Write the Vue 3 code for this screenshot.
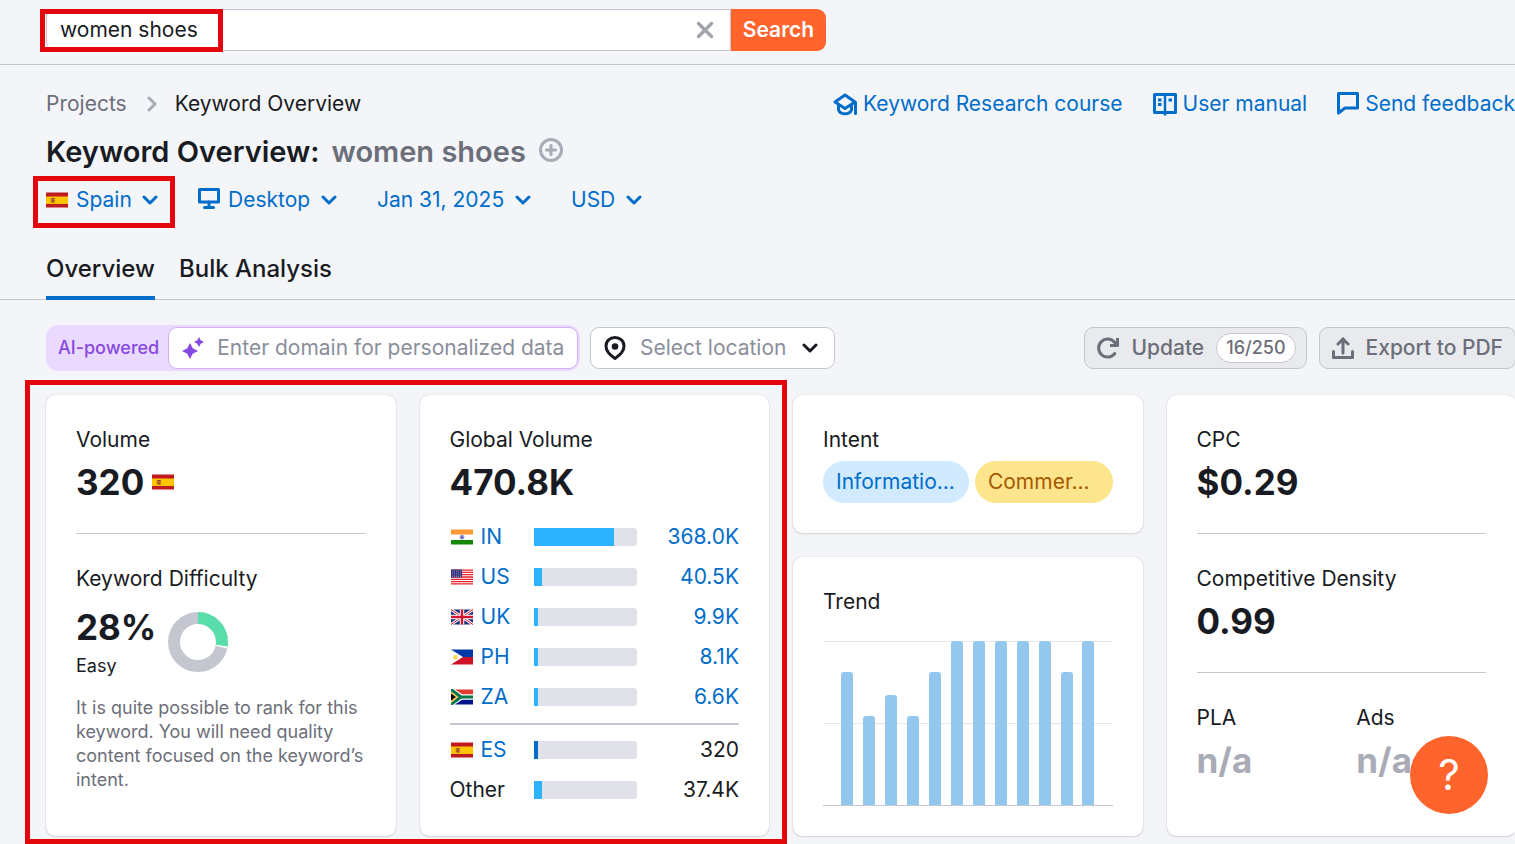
<template>
    <div class="page">
        <header class="topbar">
            <form class="search" role="search" @submit.prevent>
                <div class="search-field">
                    <input v-model="query" type="text" aria-label="Keyword" />
                    <button type="button" class="icon-button" aria-label="Clear" @click="query = ''">
                        <svg width="18" height="18" viewBox="0 0 18 18">
                            <path d="M2.500 2.500 15.500 15.500M15.500 2.500 2.500 15.500" fill="none" stroke="#a2a4ad" stroke-width="3.400" stroke-linecap="round" />
                        </svg>
                    </button>
                </div>
                <button type="submit" class="search-submit">Search</button>
                <div class="mark mark-search"></div>
            </form>
        </header>

        <section class="head">
            <div class="head-row">
                <nav class="breadcrumb" aria-label="Breadcrumb">
                    <a href="#">Projects</a>
                    <svg width="10" height="16" viewBox="0 0 10 16">
                        <path d="M2 2l6 6-6 6" fill="none" stroke="#a9abb6" stroke-width="3" stroke-linecap="round" stroke-linejoin="round" />
                    </svg>
                    <span>Keyword Overview</span>
                </nav>
                <nav class="help-links" aria-label="Help">
                    <a href="#">
                        <svg width="24" height="24" viewBox="0 0 24 24" fill="none" stroke="currentColor" stroke-width="3" stroke-linejoin="round" stroke-linecap="round">
                            <path d="M12 3 2 10l10 6.500L22 10z" />
                            <path d="M5.500 13.500v4.500c2 5 11 5 13 0v-4" />
                            <path d="M22.500 10.500v11" />
                        </svg>
                        Keyword Research course
                    </a>
                    <a href="#">
                        <svg width="24" height="24" viewBox="0 0 24 24" fill="none" stroke="currentColor">
                            <path d="M1.500 2.500h21v18h-21z" stroke-width="3" stroke-linejoin="round" />
                            <path d="M12 2v21.500" stroke-width="2.500" />
                            <path d="M5 8h3.500M5 12.500h3.500M15.500 8H19" stroke-width="3" />
                        </svg>
                        User manual
                    </a>
                    <a href="#">
                        <svg width="22" height="24" viewBox="0 0 22 24">
                            <path d="M1.500 1.500h19v14.500H8l-6.500 5z" fill="none" stroke="currentColor" stroke-width="3" stroke-linejoin="round" />
                        </svg>
                        Send feedback
                    </a>
                </nav>
            </div>

            <h1>
                <span>Keyword Overview:</span>
                <span class="keyword">{{ query }}</span>
                <button type="button" class="icon-button" aria-label="Add to list">
                    <svg width="26" height="28" viewBox="0 0 26 28" fill="none" stroke="#a9abb6" stroke-width="3" stroke-linecap="round">
                        <circle cx="13" cy="12" r="10.500" />
                        <path d="M13 7.500v9M8.500 12h9" />
                    </svg>
                </button>
            </h1>

            <div class="filters">
                <div v-for="filter in filters" :key="filter.label" class="filter">
                    <svg v-if="filter.icon === 'flag'" width="22" height="16" viewBox="0 0 22 15" v-html="flags.ES"></svg>
                    <svg v-if="filter.icon === 'desktop'" width="22" height="26" viewBox="0 0 22 26">
                        <path d="M1.500 2.500h19v12.500h-19z" fill="none" stroke="#006dca" stroke-width="3" stroke-linejoin="round" />
                        <path d="M11 15v5M6.500 20.500h9" fill="none" stroke="#006dca" stroke-width="3" stroke-linecap="round" />
                    </svg>
                    <select :aria-label="filter.label">
                        <option>{{ filter.value }}</option>
                    </select>
                    <svg class="chevron" width="16" height="10" viewBox="0 0 16 10">
                        <path d="M2 2l6 6 6-6" fill="none" stroke="#006dca" stroke-width="3" stroke-linecap="round" stroke-linejoin="round" />
                    </svg>
                    <div v-if="filter.icon === 'flag'" class="mark mark-country"></div>
                </div>
            </div>

            <nav class="tabs" aria-label="Reports">
                <a href="#" class="active">Overview</a>
                <a href="#">Bulk Analysis</a>
            </nav>
        </section>

        <main>
            <div class="toolbar">
                <label class="ai">
                    <span>AI-powered</span>
                    <span class="ai-field">
                        <svg width="22" height="22" viewBox="0 0 22 22" fill="#8649e1">
                            <path d="M8 6l2.700 5.300L16 14l-5.300 2.700L8 22l-2.700-5.300L0 14l5.300-2.700z" />
                            <path d="M17 0l1.700 3.300L22 5l-3.300 1.700L17 10l-1.700-3.300L12 5l3.300-1.700z" />
                        </svg>
                        <input type="text" placeholder="Enter domain for personalized data" />
                    </span>
                </label>
                <div class="location">
                    <svg width="22" height="26" viewBox="0 0 22 26">
                        <path d="M11 2.500c-5 0-9 3.700-9 8.500 0 5.500 4.500 9.500 9 12.500 4.500-3 9-7 9-12.500 0-4.800-4-8.500-9-8.500z" fill="none" stroke="#191b23" stroke-width="3" />
                        <circle cx="11" cy="11.500" r="3.300" fill="#191b23" />
                    </svg>
                    <select aria-label="Location">
                        <option>Select location</option>
                    </select>
                    <svg class="chevron" width="16" height="10" viewBox="0 0 16 10">
                        <path d="M2 2l6 6 6-6" fill="none" stroke="#191b23" stroke-width="3" stroke-linecap="round" stroke-linejoin="round" />
                    </svg>
                </div>
                <div class="actions">
                    <button type="button" class="action">
                        <svg width="22" height="22" viewBox="0 0 22 22" fill="none" stroke="currentColor" stroke-width="3">
                            <path d="M17.800 16.500A9 9 0 1 1 17.500 5.200l1.500 1.800" stroke-linecap="round" />
                            <path d="M20.500 1v7.500H13" stroke-linejoin="round" />
                        </svg>
                        Update
                        <span class="quota">16/250</span>
                    </button>
                    <button type="button" class="action">
                        <svg width="22" height="22" viewBox="0 0 22 22" fill="none" stroke="currentColor" stroke-width="3">
                            <path d="M1.500 14.500v6h19v-6" stroke-linecap="round" stroke-linejoin="round" />
                            <path d="M11 16V3M6 7l5-5 5 5" stroke-linecap="round" />
                        </svg>
                        Export to PDF
                    </button>
                </div>
            </div>

            <div class="cards">
                <div class="volume-group">
                    <section class="card">
                        <h2>Volume</h2>
                        <p class="value">
                            320
                            <svg width="22" height="16" viewBox="0 0 22 15" v-html="flags.ES"></svg>
                        </p>
                        <hr />
                        <h2>Keyword Difficulty</h2>
                        <div class="difficulty">
                            <div>
                                <p class="percent">28%</p>
                                <p class="level">Easy</p>
                            </div>
                            <svg width="60" height="60" viewBox="0 0 60 60" fill="none" stroke-width="12">
                                <circle cx="30" cy="30" r="24" stroke="#c4c7cf" />
                                <circle cx="30" cy="30" r="24" stroke="#fff" pathLength="100" stroke-dasharray="28.500 100" transform="rotate(-90 30 30)" />
                                <circle cx="30" cy="30" r="24" stroke="#59ddaa" pathLength="100" stroke-dasharray="27.500 100" transform="rotate(-90 30 30)" />
                            </svg>
                        </div>
                        <p class="hint">It is quite possible to rank for this keyword. You will need quality content focused on the keyword’s intent.</p>
                    </section>

                    <section class="card global-volume">
                        <h2>Global Volume</h2>
                        <p class="value">470.8K</p>
                        <table>
                            <tbody>
                                <tr v-for="row in countries" :key="row.code" :class="{ local: row.local }">
                                    <th scope="row">
                                        <a v-if="row.flag" href="#" class="country">
                                            <svg width="22" height="16" viewBox="0 0 22 15" v-html="flags[row.code]"></svg>
                                            {{ row.code }}
                                        </a>
                                        <span v-else>{{ row.code }}</span>
                                    </th>
                                    <td class="bar-cell">
                                        <div class="bar">
                                            <div :style="{ width: row.share + '%' }"></div>
                                        </div>
                                    </td>
                                    <td class="amount">
                                        <a v-if="row.flag && !row.local" href="#">{{ row.volume }}</a>
                                        <span v-else>{{ row.volume }}</span>
                                    </td>
                                </tr>
                            </tbody>
                        </table>
                    </section>
                    <div class="mark mark-volume"></div>
                </div>

                <div class="column">
                    <section class="card">
                        <h2>Intent</h2>
                        <div class="intents">
                            <span class="intent informational">Informatio...</span>
                            <span class="intent commercial">Commer...</span>
                        </div>
                    </section>
                    <section class="card trend">
                        <h2>Trend</h2>
                        <div class="chart">
                            <div v-for="(height, i) in trend" :key="i" :style="{ height: height + '%' }"></div>
                        </div>
                    </section>
                </div>

                <section class="card">
                    <h2>CPC</h2>
                    <p class="value">$0.29</p>
                    <hr />
                    <h2>Competitive Density</h2>
                    <p class="value">0.99</p>
                    <hr />
                    <div class="split">
                        <div>
                            <h2>PLA</h2>
                            <p class="value empty">n/a</p>
                        </div>
                        <div>
                            <h2>Ads</h2>
                            <p class="value empty">n/a</p>
                        </div>
                    </div>
                </section>
            </div>
        </main>

        <button type="button" class="help">?</button>
    </div>
</template>

<script setup>
import { ref } from "vue";

const query = ref("women shoes");

const filters = [
    { label: "Country", value: "Spain", icon: "flag" },
    { label: "Device", value: "Desktop", icon: "desktop" },
    { label: "Date", value: "Jan 31, 2025" },
    { label: "Currency", value: "USD" }
];

const countries = [
    { code: "IN", flag: true, share: 78, volume: "368.0K" },
    { code: "US", flag: true, share: 8, volume: "40.5K" },
    { code: "UK", flag: true, share: 4, volume: "9.9K" },
    { code: "PH", flag: true, share: 4, volume: "8.1K" },
    { code: "ZA", flag: true, share: 4, volume: "6.6K" },
    { code: "ES", flag: true, local: true, share: 4, volume: "320" },
    { code: "Other", share: 8, volume: "37.4K" }
];

const trend = [81, 54, 67, 54, 81, 100, 100, 100, 100, 100, 81, 100];

// inner markup of 22x15 flags
const flags = {
    ES: `<path fill="#c0191f" d="M0 0h22v15H0z"/><path fill="#ffc400" d="M0 4h22v7.500H0z"/>
        <path fill="#d9962a" d="M4.500 5.500h4.500v4.500H4.500z"/><path fill="none" stroke="#8f3a1c" d="M8.500 6H6v3.500h2.500M7 7.800h1.500"/>`,
    IN: `<path fill="#fff" d="M0 0h22v15H0z"/><path fill="#f93" d="M0 0h22v5H0z"/><path fill="#128807" d="M0 10.500h22V15H0z"/>
        <circle cx="11" cy="7.700" r="2" fill="#b5b5dc" stroke="#7777bb" stroke-width=".8"/><circle cx="11" cy="7.700" r=".8" fill="#000088"/>`,
    US: `<path fill="#fff" d="M0 0h22v15H0z"/>
        <path stroke="#e8202a" stroke-width="1.300" d="M0 .6h22M0 2.900h22M0 5.200h22M0 7.500h22M0 9.800h22M0 12.100h22M0 14.400h22"/>
        <path fill="#32327c" d="M0 0h11v8H0z"/><path stroke="#9c9cc8" stroke-width=".8" stroke-dasharray="1 1" d="M1 1.500h9M1 3.500h9M1 5.500h9M1 7h9"/>`,
    UK: `<path fill="#1b2f7d" d="M0 0h22v15H0z"/><path stroke="#fff" stroke-width="2.800" d="M0 0l22 15M22 0L0 15"/>
        <path stroke="#d2142e" stroke-width="1" d="M0 0l22 15M22 0L0 15"/><path stroke="#fff" stroke-width="4.500" d="M11 0v15M0 7.500h22"/>
        <path stroke="#d2142e" stroke-width="2.400" d="M11 0v15M0 7.500h22"/>`,
    PH: `<path fill="#0038a8" d="M0 0h22v7.500H0z"/><path fill="#ce1126" d="M0 7.500h22V15H0z"/><path fill="#fff" d="M0 0l12 7.500L0 15z"/>
        <circle cx="4.300" cy="7.700" r="2.300" fill="#fcd94a"/>`,
    ZA: `<path fill="#fff" d="M0 0h22v15H0z"/><path fill="#e03c31" d="M4 0h18v4.800H11z"/><path fill="#001489" d="M4 15h18v-4.800H11z"/>
        <path fill="none" stroke="#007749" stroke-width="3" d="M0 0l10 7.500L0 15M10 7.500h12"/>
        <path fill="#ffb81c" d="M0 2.500l6.800 5L0 12.500z"/><path fill="#000" d="M0 4l4.800 3.500L0 11z"/>`
};
</script>

<style>
body {
    background: #f4f5f9;
}
</style>

<style scoped>
.page {
    overflow: hidden;
    padding-bottom: 8px;
    color: #191b23;
    font-family: Inter, "Liberation Sans", sans-serif;
    font-size: 21px;
    line-height: 30px;
}

.page * {
    box-sizing: border-box;
}

h1,
h2,
p {
    margin: 0;
}

a {
    color: #006dca;
    text-decoration: none;
}

svg {
    display: block;
    flex: none;
}

button,
input,
select {
    font: inherit;
}

select {
    appearance: none;
    margin: 0;
    border: 0;
    background: none;
    outline: none;
}

.icon-button {
    padding: 0;
    border: 0;
    background: none;
}

.mark {
    position: absolute;
    border: 5px solid #e3060b;
    pointer-events: none;
}

.topbar {
    padding: 9px 46px 13px;
    border-bottom: 1px solid #c4c7cf;
}

.search {
    position: relative;
    display: flex;
    max-width: 780px;
    height: 42px;
}

.search-field {
    flex: 1;
    display: flex;
    align-items: center;
    padding: 0 16px 0 13px;
    border: 1px solid #c4c7cf;
    border-radius: 9px 0 0 9px;
    background: #fff;
}

.search-field input {
    flex: 1;
    min-width: 0;
    padding: 0;
    border: 0;
    color: inherit;
    background: none;
    outline: none;
}

.search-submit {
    width: 95px;
    padding: 0;
    border: 0;
    border-radius: 0 9px 9px 0;
    color: #fff;
    background: #ff642d;
    font-weight: 600;
}

.mark-search {
    top: 0;
    left: -6px;
    width: 183px;
    height: 43px;
}

.head {
    padding: 24px 0 0 46px;
    border-bottom: 1px solid #c4c7cf;
}

.head-row {
    display: flex;
    justify-content: space-between;
}

.breadcrumb {
    display: flex;
    align-items: center;
    gap: 20px;
}

.breadcrumb a {
    color: #6c6e79;
}

.breadcrumb svg {
    margin-right: -2px;
}

.help-links {
    display: flex;
    gap: 30px;
    white-space: nowrap;
}

.help-links a {
    display: flex;
    align-items: center;
    gap: 6px;
}

h1 {
    display: flex;
    align-items: center;
    gap: 12px;
    margin-top: 15px;
    font-size: 29px;
    font-weight: 600;
    line-height: 36px;
}

.keyword {
    color: #6c6e79;
}

.filters {
    display: flex;
    gap: 40px;
    margin-top: 15px;
}

.filter {
    position: relative;
    display: flex;
    align-items: center;
    gap: 8px;
}

.filter select {
    height: 30px;
    padding: 0 26px 0 0;
    color: #006dca;
}

.chevron {
    position: absolute;
    top: 50%;
    right: 0;
    margin-top: -5px;
    pointer-events: none;
}

.mark-country {
    inset: -9px -17px -13px -13px;
}

.tabs {
    display: flex;
    gap: 24px;
    margin: 36px 0 -1px;
    font-size: 24px;
    font-weight: 500;
    line-height: 36px;
}

.tabs a {
    padding-bottom: 9px;
    border-bottom: 4px solid transparent;
    color: #191b23;
}

.tabs .active {
    border-color: #006dca;
}

main {
    margin-right: -1px;
    padding: 25px 0 0 46px;
}

.toolbar {
    display: flex;
    align-items: center;
    gap: 10px;
}

.ai {
    display: flex;
    align-items: center;
    gap: 9px;
    width: 534px;
    padding: 2px 2px 2px 12px;
    border-radius: 12px;
    color: #8649e1;
    background: #ebdaff;
    font-size: 18px;
    font-weight: 500;
}

.ai-field {
    flex: 1;
    display: flex;
    align-items: center;
    gap: 13px;
    min-width: 0;
    height: 42px;
    padding-left: 13px;
    border: 1px solid #cfb0f7;
    border-radius: 9px;
    background: #fff;
}

.ai-field input {
    flex: 1;
    min-width: 0;
    padding: 0;
    border: 0;
    background: none;
    outline: none;
    font-size: 21px;
    font-weight: 400;
}

.ai-field input::placeholder {
    color: #8a8e9b;
    opacity: 1;
}

.location {
    position: relative;
    display: flex;
    align-items: center;
    gap: 14px;
    height: 42px;
    padding-left: 13px;
    border: 1px solid #c4c7cf;
    border-radius: 9px;
    background: #fff;
}

.location select {
    height: 40px;
    padding: 0 47px 0 0;
    color: #8a8e9b;
}

.location .chevron {
    right: 16px;
}

.actions {
    display: flex;
    gap: 12px;
    margin-left: auto;
}

.action {
    display: flex;
    align-items: center;
    gap: 12px;
    height: 42px;
    padding: 0 12px;
    border: 1px solid #c4c7cf;
    border-radius: 9px;
    color: #6c6e79;
    background: #e9eaee;
    font-weight: 500;
    white-space: nowrap;
}

.quota {
    margin-right: -2px;
    padding: 0 9px;
    border: 1px solid #c4c7cf;
    border-radius: 15px;
    background: #fff;
    font-size: 18px;
    line-height: 28px;
}

.cards {
    display: grid;
    grid-template-columns: repeat(4, minmax(0, 1fr));
    gap: 24px;
    margin-top: 24px;
}

.volume-group {
    position: relative;
    grid-column: span 2;
    display: grid;
    grid-template-columns: repeat(2, minmax(0, 1fr));
    gap: 24px;
}

.mark-volume {
    inset: -15px -18px -8px -21px;
}

.column {
    display: flex;
    flex-direction: column;
    gap: 24px;
}

.card {
    padding: 30px;
    border-radius: 9px;
    background: #fff;
    box-shadow: 0 0 1px rgba(25, 27, 35, 0.3), 0 1px 2px rgba(25, 27, 35, 0.12);
}

.global-volume {
    padding-bottom: 26px;
}

.card h2 {
    font-size: 21px;
    font-weight: 400;
    line-height: 30px;
}

.value,
.percent {
    font-size: 35px;
    font-weight: 700;
    line-height: 42px;
}

.value {
    display: flex;
    align-items: center;
    gap: 8px;
    margin-top: 6px;
}

.empty {
    color: #a9abb6;
}

hr {
    margin: 30px 0;
    border: 0;
    border-top: 1px solid #c4c7cf;
}

.difficulty {
    display: flex;
    align-items: center;
    gap: 12px;
    margin-top: 12px;
}

.level {
    margin-top: 6px;
    font-size: 18px;
    line-height: 24px;
}

.hint {
    margin-top: 18px;
    color: #6c6e79;
    font-size: 18px;
    line-height: 24px;
}

table {
    width: 100%;
    margin-top: 14px;
    border-collapse: collapse;
    table-layout: fixed;
}

th,
td {
    padding: 0;
    line-height: 40px;
}

th {
    width: 84px;
    font-weight: 400;
    text-align: left;
}

.country {
    display: flex;
    align-items: center;
    gap: 8px;
    padding-left: 1px;
}

.bar-cell {
    width: 103px;
}

.bar {
    height: 18px;
    overflow: hidden;
    border-radius: 0 3px 3px 0;
    background: #e0e1e9;
}

.bar div {
    height: 100%;
    background: #2bb3ff;
}

.amount {
    text-align: right;
}

tr:has(+ .local) > * {
    padding-bottom: 6px;
}

.local > * {
    padding-top: 5px;
    border-top: 2px solid #c4c7cf;
}

.local .bar div {
    background: #006dca;
}

.intents {
    display: flex;
    gap: 6px;
    margin-top: 6px;
}

.intent {
    padding: 0 14px 0 13px;
    border-radius: 21px;
    line-height: 42px;
    white-space: nowrap;
}

.informational {
    color: #006dca;
    background: #d1eaff;
}

.commercial {
    flex: 1;
    color: #a75800;
    background: #fce58c;
}

.trend {
    flex: 1;
}

.chart {
    display: flex;
    justify-content: space-between;
    align-items: flex-end;
    height: 165px;
    margin-top: 24px;
    padding: 0 18px;
    border-bottom: 1px solid #c4c7cf;
    background:
        linear-gradient(#e6e7ec, #e6e7ec) 0 0 / 100% 1px no-repeat,
        linear-gradient(#e6e7ec, #e6e7ec) 0 50% / 100% 1px no-repeat;
}

.chart div {
    width: 12px;
    border-radius: 3px 3px 0 0;
    background: #93c7ee;
}

.split {
    display: grid;
    grid-template-columns: 1fr 1fr;
    gap: 30px;
}

.help {
    position: fixed;
    right: 27px;
    bottom: 30px;
    width: 78px;
    height: 78px;
    padding: 0;
    border: 0;
    border-radius: 50%;
    color: #fff;
    background: #ff642d;
    font-size: 42px;
    font-weight: 400;
}
</style>
